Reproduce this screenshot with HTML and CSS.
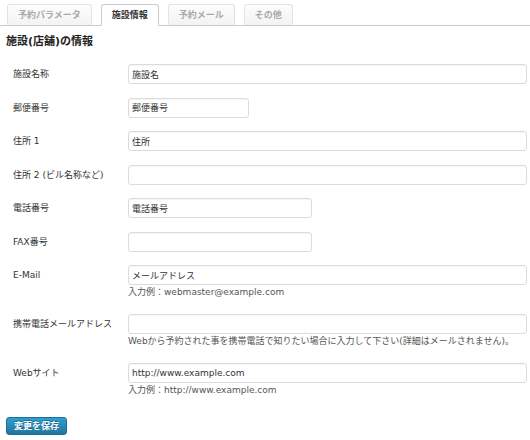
FILE: index.html
```html
<!DOCTYPE html>
<html lang="ja">
<head>
<meta charset="utf-8">
<title>施設情報</title>
<link rel="stylesheet" href="styles.css">
</head>
<body>
<nav class="tabs">
  <a class="tab">予約パラメータ</a>
  <a class="tab active">施設情報</a>
  <a class="tab">予約メール</a>
  <a class="tab">その他</a>
</nav>
<main class="page">
  <h2 class="title">施設(店舗)の情報</h2>
  <form class="form">
    <div class="row"><label class="lbl">施設名称</label><div class="field"><input class="in wide" type="text" value="施設名"></div></div>
    <div class="row"><label class="lbl">郵便番号</label><div class="field"><input class="in short" type="text" value="郵便番号"></div></div>
    <div class="row"><label class="lbl">住所 1</label><div class="field"><input class="in wide" type="text" value="住所"></div></div>
    <div class="row"><label class="lbl">住所 2 (ビル名称など)</label><div class="field"><input class="in wide" type="text" value=""></div></div>
    <div class="row"><label class="lbl">電話番号</label><div class="field"><input class="in mid" type="text" value="電話番号"></div></div>
    <div class="row"><label class="lbl">FAX番号</label><div class="field"><input class="in mid" type="text" value=""></div></div>
    <div class="row"><label class="lbl">E-Mail</label><div class="field"><input class="in wide" type="text" value="メールアドレス"><p class="desc">入力例：webmaster@example.com</p></div></div>
    <div class="row"><label class="lbl">携帯電話メールアドレス</label><div class="field"><input class="in wide" type="text" value=""><p class="desc">Webから予約された事を携帯電話で知りたい場合に入力して下さい(詳細はメールされません)。</p></div></div>
    <div class="row"><label class="lbl">Webサイト</label><div class="field"><input class="in wide" type="text" value="http://www.example.com"><p class="desc">入力例：http://www.example.com</p></div></div>
    <div class="actions"><button class="btn" type="button">変更を保存</button></div>
  </form>
</main>
</body>
</html>
```
FILE: styles.css
```css
html, body {
  margin: 0;
  padding: 0;
  background: #fff;
}
body {
  font-family: "DejaVu Sans", "Noto Sans CJK JP", sans-serif;
  font-size: 9px;
  color: #333;
}
.tabs {
  display: flex;
  gap: 9px;
  margin-top: 4px;
  padding-left: 7px;
  height: 21px;
  border-bottom: 1px solid #ccc;
}
.tab {
  box-sizing: border-box;
  height: 22px;
  padding: 0 10px;
  border: 1px solid #e3e3e3;
  border-bottom-color: #ccc;
  border-radius: 3px 3px 0 0;
  background: linear-gradient(#fdfdfd, #f3f3f3);
  color: #aaa;
  font-weight: bold;
  font-size: 9px;
  line-height: 20px;
  text-decoration: none;
}
.tab.active {
  background: #fff;
  border-color: #ccc;
  border-bottom-color: #fff;
  color: #333;
}
.page {
  padding: 0 3px 0 6px;
}
.title {
  margin: 9px 0 0;
  font-size: 11px;
  line-height: 14px;
  font-weight: bold;
  color: #222;
}
.form {
  margin-top: 8px;
}
.row {
  display: grid;
  grid-template-columns: 122px 1fr;
  padding: 7px 0 6.5px;
}
.lbl {
  padding-left: 7px;
  line-height: 20px;
  font-size: 9px;
  color: #333;
}
.field {
  display: flex;
  flex-direction: column;
  align-items: flex-start;
}
.in {
  box-sizing: border-box;
  height: 20px;
  margin: 0;
  padding: 0 3px;
  border: 1px solid #dcdcdc;
  border-radius: 3px;
  background: #fff;
  box-shadow: inset 0 1px 1px rgba(0,0,0,0.04);
  font-family: "DejaVu Sans", "Noto Sans CJK JP", sans-serif;
  font-size: 9px;
  color: #333;
  outline: none;
}
.wide { width: 100%; }
.short { width: 121px; }
.mid { width: 184px; }
.desc {
  margin: 0;
  font-size: 9px;
  line-height: 15.5px;
  color: #555;
  white-space: nowrap;
}
.actions {
  padding-top: 12px;
}
.btn {
  box-sizing: border-box;
  height: 18px;
  padding: 0 7px;
  border: 1px solid #1f6e93;
  border-radius: 3px;
  background: linear-gradient(#2e9fd2, #21759b);
  color: #fff;
  font-family: "DejaVu Sans", "Noto Sans CJK JP", sans-serif;
  font-size: 9px;
  font-weight: bold;
  line-height: 16px;
  text-shadow: 0 -1px 0 rgba(0,0,0,0.3);
}
```
